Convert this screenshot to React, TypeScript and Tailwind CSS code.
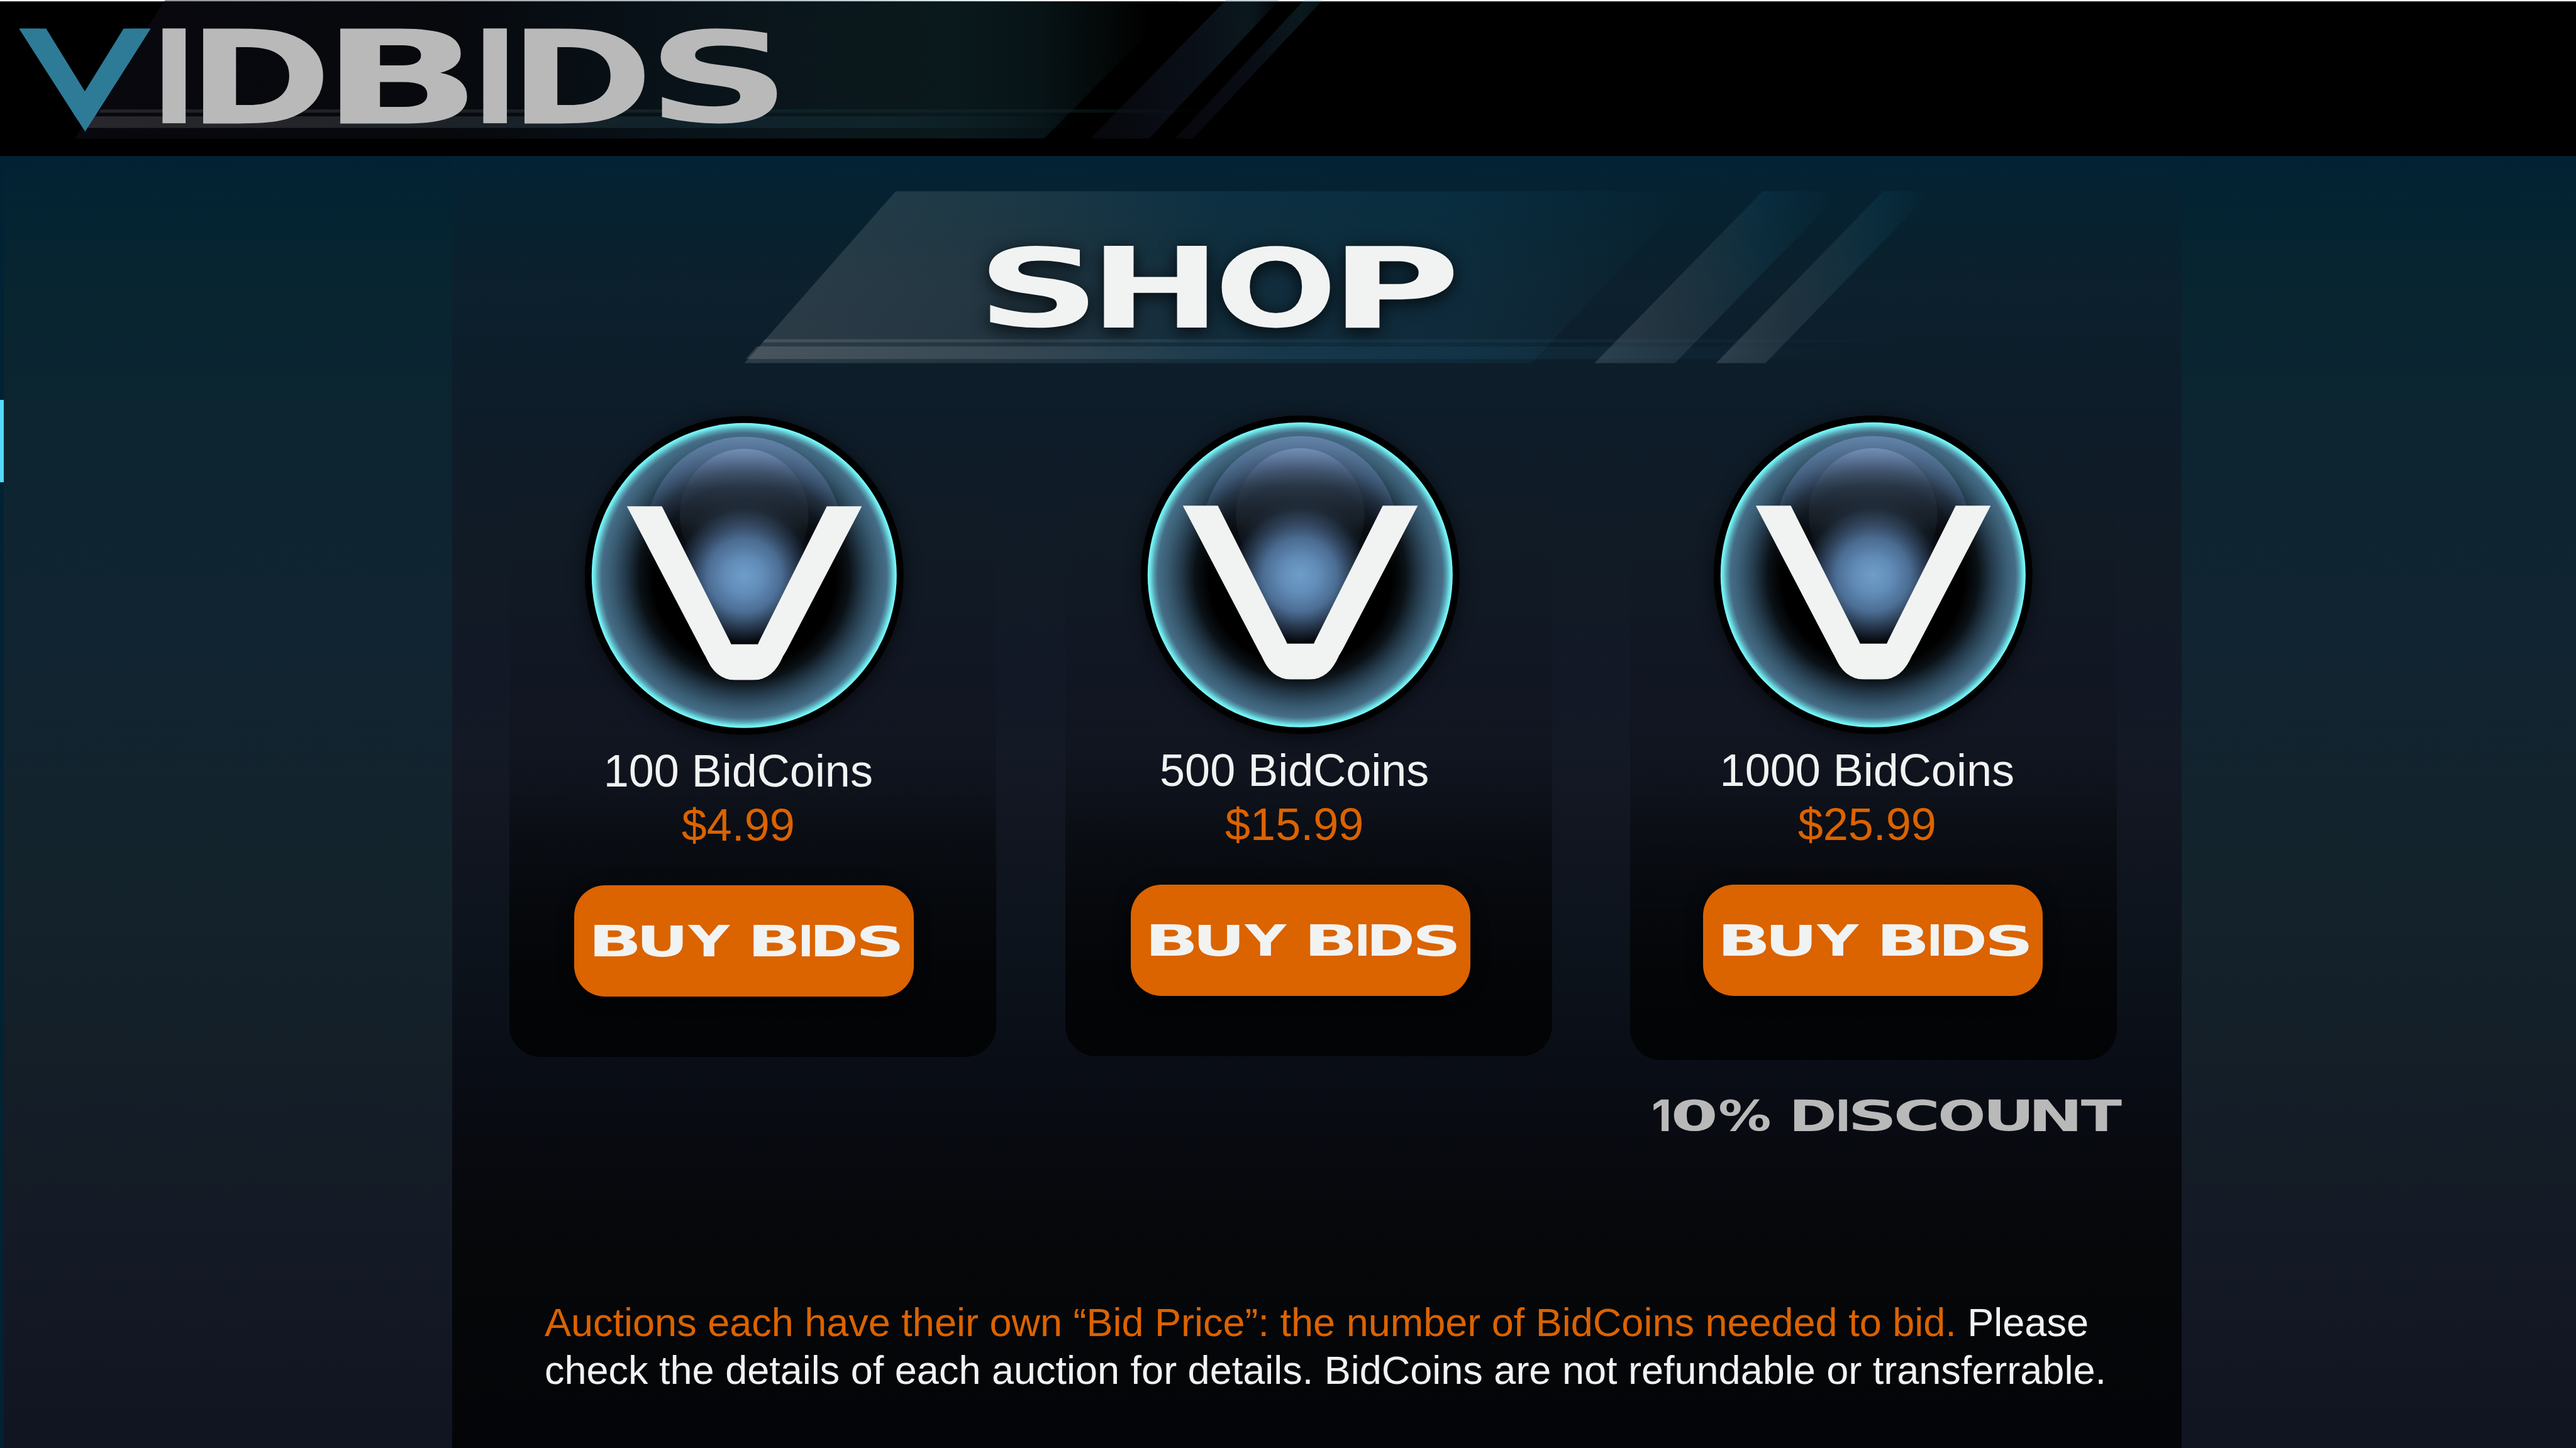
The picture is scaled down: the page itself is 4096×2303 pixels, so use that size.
import React, { useMemo } from "react";

type Glyph = {
  char: string;
  from: number;
  to: number;
  family?: string;
};

type Ink = { left: number; right: number; above: number; below: number };

const inkCache = new Map<string, Ink>();

/** Extents of a character's ink at a font size of 100, found by rasterising it. */
function inkOf(char: string, weight: number, family: string): Ink {
  const key = `${char}|${weight}|${family}`;
  const known = inkCache.get(key);
  if (known) return known;

  const size = 500;
  const side = 800;
  const originX = 100;
  const originY = 600;
  const canvas = document.createElement("canvas");
  canvas.width = side;
  canvas.height = side;
  const context = canvas.getContext("2d", { willReadFrequently: true })!;
  context.font = `${weight} ${size}px "${family}"`;
  context.fillText(char, originX, originY);
  const { data } = context.getImageData(0, 0, side, side);

  let minX = side;
  let maxX = 0;
  let minY = side;
  let maxY = 0;
  for (let y = 0; y < side; y++) {
    for (let x = 0; x < side; x++) {
      if (data[(y * side + x) * 4 + 3] > 100) {
        if (x < minX) minX = x;
        if (x > maxX) maxX = x;
        if (y < minY) minY = y;
        if (y > maxY) maxY = y;
      }
    }
  }
  const unit = 100 / size;
  const ink = {
    left: (minX - originX) * unit,
    right: (maxX + 1 - originX) * unit,
    above: (originY - minY) * unit,
    below: (maxY + 1 - originY) * unit,
  };
  inkCache.set(key, ink);
  return ink;
}

/** A line of display lettering whose characters are stretched to fixed extents. */
function WideText({
  glyphs,
  top,
  bottom,
  fill,
  family = "DejaVu Sans",
  weight = 700,
  stroke = 0,
}: {
  glyphs: Glyph[];
  top: number;
  bottom: number;
  fill: string;
  family?: string;
  weight?: number;
  stroke?: number;
}) {
  const letters = useMemo(
    () =>
      glyphs.map((glyph) => {
        const face = glyph.family ?? family;
        const ink = inkOf(glyph.char, weight, face);
        const sx = (glyph.to - glyph.from) / (ink.right - ink.left);
        const sy = (bottom - top) / (ink.above + ink.below);
        const x = glyph.from - ink.left * sx;
        const y = bottom - ink.below * sy;
        return { char: glyph.char, face, transform: `translate(${x} ${y}) scale(${sx} ${sy})` };
      }),
    [glyphs, top, bottom, family, weight],
  );

  return (
    <g
      fill={fill}
      fontSize={100}
      fontWeight={weight}
      textRendering="geometricPrecision"
      stroke={stroke ? fill : "none"}
      strokeWidth={stroke}
    >
      {letters.map(({ char, face, transform }, i) => (
        <text key={i} transform={transform} fontFamily={`"${face}", sans-serif`}>
          {char}
        </text>
      ))}
    </g>
  );
}

const LOGO_V: Glyph[] = [{ char: "V", from: 42, to: 333 }];

const LOGO: Glyph[] = [
  { char: "I", from: 359, to: 410 },
  { char: "D", from: 449, to: 714 },
  { char: "B", from: 752, to: 1032 },
  { char: "I", from: 1068, to: 1120 },
  { char: "D", from: 1159, to: 1424 },
  { char: "S", from: 1460, to: 1717 },
];

const SHOP: Glyph[] = [
  { char: "S", from: 1, to: 220 },
  { char: "H", from: 255, to: 482 },
  { char: "O", from: 515, to: 754 },
  { char: "P", from: 789, to: 1027 },
];

const BUY_BIDS: Glyph[] = [
  { char: "B", from: 42.5, to: 136.4 },
  { char: "U", from: 147.4, to: 236.9 },
  { char: "Y", from: 248.6, to: 341.8 },
  { char: "B", from: 393.8, to: 487.7 },
  { char: "I", from: 500.2, to: 517.8 },
  { char: "D", from: 529.5, to: 618.3 },
  { char: "S", from: 630, to: 716.6 },
];

const DISCOUNT: Glyph[] = [
  { char: "1", from: 2, to: 35, family: "Inter" },
  { char: "0", from: 46.7, to: 137 },
  { char: "%", from: 148.5, to: 258 },
  { char: "D", from: 312.5, to: 400 },
  { char: "I", from: 411.7, to: 429.3 },
  { char: "S", from: 441.6, to: 528.8 },
  { char: "C", from: 538.8, to: 626 },
  { char: "O", from: 636, to: 729.3 },
  { char: "U", from: 742.3, to: 831 },
  { char: "N", from: 842.6, to: 937.5 },
  { char: "T", from: 946.7, to: 1036 },
];

const COIN_LETTER: Glyph[] = [{ char: "V", from: -259.5, to: 259.5 }];

function Header() {
  return (
    <header className="relative h-[247.5px] w-full shrink-0 bg-black">
      <svg
        className="absolute inset-0 h-full w-full overflow-visible"
        viewBox="0 0 5692 344"
        preserveAspectRatio="none"
      >
        <defs>
          <linearGradient id="headBand" gradientUnits="userSpaceOnUse" x1="165" y1="0" x2="2540" y2="0">
            <stop offset="0" stopColor="#08080e" />
            <stop offset="0.35" stopColor="#07090d" />
            <stop offset="0.5" stopColor="#081016" />
            <stop offset="0.66" stopColor="#0a161b" />
            <stop offset="0.82" stopColor="#0a191c" />
            <stop offset="0.9" stopColor="#071316" />
            <stop offset="0.96" stopColor="#040808" />
            <stop offset="1" stopColor="#000000" />
          </linearGradient>
          <linearGradient id="headLine" gradientUnits="userSpaceOnUse" x1="365" y1="0" x2="2540" y2="0">
            <stop offset="0" stopColor="#96969c" />
            <stop offset="0.65" stopColor="#b8c8d0" />
            <stop offset="0.85" stopColor="#e2f0f6" />
            <stop offset="1" stopColor="#ffffff" />
          </linearGradient>
          <linearGradient id="headBar" gradientUnits="userSpaceOnUse" x1="190" y1="0" x2="2380" y2="0">
            <stop offset="0" stopColor="#28282c" />
            <stop offset="0.3" stopColor="#202327" />
            <stop offset="0.6" stopColor="#10222a" />
            <stop offset="0.8" stopColor="#0f242b" />
            <stop offset="1" stopColor="#0f242b" stopOpacity="0" />
          </linearGradient>
          <linearGradient id="headThin" gradientUnits="userSpaceOnUse" x1="218" y1="0" x2="2660" y2="0">
            <stop offset="0" stopColor="#232327" />
            <stop offset="0.3" stopColor="#1e2024" />
            <stop offset="0.6" stopColor="#0e2229" />
            <stop offset="0.8" stopColor="#0d2026" />
            <stop offset="1" stopColor="#0d2026" stopOpacity="0" />
          </linearGradient>
          <linearGradient id="headStripeA" gradientUnits="userSpaceOnUse" x1="2410" y1="0" x2="2827" y2="0">
            <stop offset="0" stopColor="#07070c" />
            <stop offset="0.55" stopColor="#0a0f17" />
            <stop offset="0.85" stopColor="#0a181d" />
            <stop offset="1" stopColor="#020405" />
          </linearGradient>
          <linearGradient id="headStripeB" gradientUnits="userSpaceOnUse" x1="2597" y1="0" x2="2925" y2="0">
            <stop offset="0" stopColor="#07070c" />
            <stop offset="0.5" stopColor="#090c15" />
            <stop offset="0.85" stopColor="#0a191e" />
            <stop offset="1" stopColor="#061012" />
          </linearGradient>
          <clipPath id="logoPoint">
            <polygon points="42,63 333,63 188,291" />
          </clipPath>
        </defs>
        <rect width="5692" height="3" fill="#ffffff" />
        <polygon points="365,0 2610,0 2608,3 363,3" fill="url(#headLine)" />
        <polygon points="363,3 2607,3 2307,306 165,306" fill="url(#headBand)" />
        <polygon points="2706,3 2824,3 2539,306 2410,306" fill="url(#headStripeA)" />
        <polygon points="2879,3 2920,3 2636,306 2597,306" fill="url(#headStripeB)" />
        <polygon points="2709,0 2827,0 2824,3 2706,3" fill="#c4d2da" />
        <polygon points="2881,0 2923,0 2920,3 2879,3" fill="#d3e4ec" />
        <polygon points="223,242 2660,242 2660,249 218,249" fill="url(#headThin)" />
        <polygon points="205,257 2380,257 2380,283 190,283" fill="url(#headBar)" />
        <g clipPath="url(#logoPoint)">
          <WideText glyphs={LOGO_V} top={63} bottom={257} fill="#2e7b97" weight={400} stroke={6.5} />
          <rect x="160" y="250" width="56" height="42" fill="#2e7b97" />
        </g>
        <WideText glyphs={LOGO} top={63} bottom={273} fill="#b9b9b9" />
      </svg>
    </header>
  );
}

function ShopTitle() {
  return (
    <div className="relative flex h-[414.5px] w-full shrink-0 justify-start">
      <svg
        className="absolute inset-0 h-full w-full"
        viewBox="999 344 3821 576"
        preserveAspectRatio="none"
      >
        <defs>
          <linearGradient id="shopBand" gradientUnits="userSpaceOnUse" x1="1645" y1="0" x2="3740" y2="0">
            <stop offset="0" stopColor="#ffffff" stopOpacity="0.13" />
            <stop offset="0.25" stopColor="#d5e5e5" stopOpacity="0.115" />
            <stop offset="0.5" stopColor="#3c8eb0" stopOpacity="0.13" />
            <stop offset="0.75" stopColor="#2080a8" stopOpacity="0.12" />
            <stop offset="1" stopColor="#2080a0" stopOpacity="0" />
          </linearGradient>
          <linearGradient id="shopBar" gradientUnits="userSpaceOnUse" x1="1645" y1="0" x2="4080" y2="0">
            <stop offset="0" stopColor="#ffffff" stopOpacity="0.13" />
            <stop offset="0.25" stopColor="#d5dfe5" stopOpacity="0.11" />
            <stop offset="0.5" stopColor="#2f86a8" stopOpacity="0.13" />
            <stop offset="0.75" stopColor="#2a86ac" stopOpacity="0.09" />
            <stop offset="1" stopColor="#2a86ac" stopOpacity="0" />
          </linearGradient>
          <linearGradient id="shopThin" gradientUnits="userSpaceOnUse" x1="1684" y1="0" x2="4200" y2="0">
            <stop offset="0" stopColor="#ffffff" stopOpacity="0.12" />
            <stop offset="0.25" stopColor="#d5dfe5" stopOpacity="0.1" />
            <stop offset="0.5" stopColor="#2f86a8" stopOpacity="0.12" />
            <stop offset="0.8" stopColor="#2a86ac" stopOpacity="0.07" />
            <stop offset="1" stopColor="#2a86ac" stopOpacity="0" />
          </linearGradient>
          <linearGradient id="shopStripeA" gradientUnits="userSpaceOnUse" x1="3523" y1="0" x2="4060" y2="0">
            <stop offset="0" stopColor="#ffffff" stopOpacity="0.13" />
            <stop offset="0.35" stopColor="#c8dce0" stopOpacity="0.1" />
            <stop offset="0.7" stopColor="#2080a0" stopOpacity="0.12" />
            <stop offset="1" stopColor="#2080a0" stopOpacity="0" />
          </linearGradient>
          <linearGradient id="shopStripeB" gradientUnits="userSpaceOnUse" x1="3792" y1="0" x2="4260" y2="0">
            <stop offset="0" stopColor="#ffffff" stopOpacity="0.14" />
            <stop offset="0.35" stopColor="#c8dce0" stopOpacity="0.1" />
            <stop offset="0.75" stopColor="#2080a0" stopOpacity="0.12" />
            <stop offset="1" stopColor="#2080a0" stopOpacity="0" />
          </linearGradient>
        </defs>
        <polygon points="1979,422 3740,422 3384,802 1645,802" fill="url(#shopBand)" />
        <polygon points="3895,422 4071,422 3701,802 3523,802" fill="url(#shopStripeA)" />
        <polygon points="4161,422 4269,422 3901,802 3792,802" fill="url(#shopStripeB)" />
        <polygon points="1691,749 4200,749 4200,756 1684,756" fill="url(#shopThin)" />
        <polygon points="1672,765 4080,765 4080,793 1648,793" fill="url(#shopBar)" />
      </svg>
      <h1 className="relative mt-[143.9px] ml-[852.7px] h-[130.3px] w-[739.8px] drop-shadow-[0_6px_14px_rgba(0,0,0,0.8)]">
        <svg className="h-full w-full overflow-visible" viewBox="0 0 1028 181">
          <WideText glyphs={SHOP} top={0} bottom={181} fill="#f1f3f2" />
        </svg>
      </h1>
    </div>
  );
}

function Coin() {
  return (
    <svg className="h-[506.6px] w-[506.6px] shrink-0 overflow-visible" viewBox="-352 -352 704 704">
      <defs>
        <radialGradient id="coinFace" gradientUnits="userSpaceOnUse" cx="0" cy="0" r="337">
          <stop offset="0" stopColor="#6e9dca" />
          <stop offset="0.12" stopColor="#628db8" />
          <stop offset="0.24" stopColor="#4c6e95" />
          <stop offset="0.34" stopColor="#28394f" />
          <stop offset="0.44" stopColor="#05080d" />
          <stop offset="0.5" stopColor="#000000" />
          <stop offset="0.6" stopColor="#000000" />
          <stop offset="0.69" stopColor="#0b1217" />
          <stop offset="0.78" stopColor="#243a4b" />
          <stop offset="0.87" stopColor="#395c72" />
          <stop offset="0.935" stopColor="#466d88" />
          <stop offset="0.96" stopColor="#55a0b0" />
          <stop offset="0.985" stopColor="#6ee6ea" />
          <stop offset="1" stopColor="#7dfcff" />
        </radialGradient>
        <linearGradient id="coinShineWide" x1="0" y1="0" x2="0" y2="1">
          <stop offset="0" stopColor="#7a97c4" stopOpacity="0.6" />
          <stop offset="0.25" stopColor="#6484b4" stopOpacity="0.36" />
          <stop offset="0.5" stopColor="#4c6890" stopOpacity="0.1" />
          <stop offset="0.7" stopColor="#4c6890" stopOpacity="0" />
        </linearGradient>
        <linearGradient id="coinShine" x1="0" y1="0" x2="0" y2="1">
          <stop offset="0" stopColor="#8ca4d0" stopOpacity="0.55" />
          <stop offset="0.14" stopColor="#7890b8" stopOpacity="0.25" />
          <stop offset="0.3" stopColor="#58707c" stopOpacity="0.1" />
          <stop offset="0.55" stopColor="#58707c" stopOpacity="0.12" />
          <stop offset="0.85" stopColor="#304858" stopOpacity="0" />
        </linearGradient>
        <filter id="coinShadow" x="-20%" y="-20%" width="140%" height="140%">
          <feGaussianBlur stdDeviation="20" />
        </filter>
        <clipPath id="coinLetterEdge">
          <path d="M-300 -154H300L86 178Q64 231 20 231H-20Q-64 231 -86 178Z" />
        </clipPath>
      </defs>
      <circle r="352" cy="6" fill="#000" opacity="0.6" filter="url(#coinShadow)" />
      <circle r="352" fill="#000" />
      <circle r="337" fill="url(#coinFace)" />
      <ellipse cy="-91" rx="216" ry="216" fill="url(#coinShineWide)" />
      <ellipse cy="-133" rx="142" ry="147" fill="url(#coinShine)" />
      <g clipPath="url(#coinLetterEdge)">
        <WideText
          glyphs={COIN_LETTER}
          top={-153}
          bottom={271}
          fill="#f1f3f2"
          family="Liberation Sans"
          weight={400}
        />
        <rect x="-42" y="152" width="84" height="80" fill="#f1f3f2" />
      </g>
    </svg>
  );
}

function Card({
  amount,
  price,
  className,
  inner,
}: {
  amount: string;
  price: string;
  className: string;
  inner: string;
}) {
  return (
    <section
      className={`flex w-[774px] shrink-0 flex-col items-start rounded-b-[49px] bg-[linear-gradient(to_bottom,rgba(0,0,0,0)_5%,rgba(0,0,0,0.04)_25%,rgba(0,0,0,0.1)_46%,rgba(0,0,0,0.22)_58%,rgba(0,0,0,0.38)_65%,rgba(0,0,0,0.6)_78%,rgba(0,0,0,0.73)_87%,rgba(0,0,0,0.75)_100%)] ${className}`}
    >
      <div className={`flex w-[540px] flex-col items-center ${inner}`}>
        <Coin />
        <div className="mt-[14px] -ml-[19px] flex flex-col items-center text-[72px] leading-[86.4px] whitespace-nowrap">
          <p className="text-[#f1f3f2]">{amount}</p>
          <p className="text-[#db6300]">{price}</p>
        </div>
        <button
          type="button"
          className="mt-[53px] h-[176.5px] w-[540px] rounded-[49px] bg-[#db6300] shadow-[0_4px_26px_rgba(0,0,0,0.7)]"
        >
          <svg className="h-full w-full" viewBox="-2.5 0 750 245">
            <WideText glyphs={BUY_BIDS} top={88} bottom={157.5} fill="#f1f3f2" />
          </svg>
        </button>
      </div>
    </section>
  );
}

export default function App() {
  return (
    <div
      className="flex h-[2303px] w-[4096px] flex-col overflow-hidden bg-black"
      style={{ fontFamily: '"Liberation Sans", Arial, sans-serif' }}
    >
      <Header />
      <main className="flex min-h-0 flex-1 bg-[linear-gradient(to_bottom,#022234_0%,#072530_9%,#0c2531_20%,#112431_38%,#13232c_55%,#141f28_69%,#141a25_84%,#111421_100%)]">
        <aside className="w-[6px] shrink-0 bg-[#012233] pt-[388.5px]">
          <div className="h-[130.5px] w-full bg-[#56d8ff]" />
        </aside>
        <div className="w-[713px] shrink-0" />
        <div className="flex w-[2749.5px] shrink-0 flex-col bg-[linear-gradient(to_bottom,#032335_0%,#08212e_6%,#0c202d_10%,#0e1c29_21%,#111b26_31%,#131826_41%,#141926_46%,#10151f_54%,#0e141d_59%,#0c121a_64%,#0a0e17_69%,#080a10_77%,#050709_85%,#040508_100%)]">
          <ShopTitle />
          <div className="flex h-[1024px] shrink-0 items-start pl-[90.7px]">
            <Card amount="100 BidCoins" price="$4.99" className="h-[1019px]" inner="ml-[103.6px]" />
            <Card
              amount="500 BidCoins"
              price="$15.99"
              className="ml-[110px] h-[1018px]"
              inner="ml-[104px] -mt-px"
            />
            <Card
              amount="1000 BidCoins"
              price="$25.99"
              className="ml-[124px] h-[1024px]"
              inner="ml-[116.6px] -mt-px"
            />
          </div>
          <div className="mt-[62.6px] ml-[1909px] h-[50.4px] w-[745.5px] shrink-0">
            <svg className="h-full w-full overflow-visible" viewBox="0 0 1036 70">
              <WideText glyphs={DISCOUNT} top={0} bottom={70} fill="#b9b9b9" />
            </svg>
          </div>
          <p className="mt-[267px] ml-[147px] text-[63px] leading-[75.6px] whitespace-nowrap text-[#f1f3f2]">
            <span className="text-[#db6300]">
              Auctions each have their own “Bid Price”: the number of BidCoins needed to bid.
            </span>{" "}
            Please
            <br />
            check the details of each auction for details. BidCoins are not refundable or transferrable.
          </p>
        </div>
      </main>
    </div>
  );
}
